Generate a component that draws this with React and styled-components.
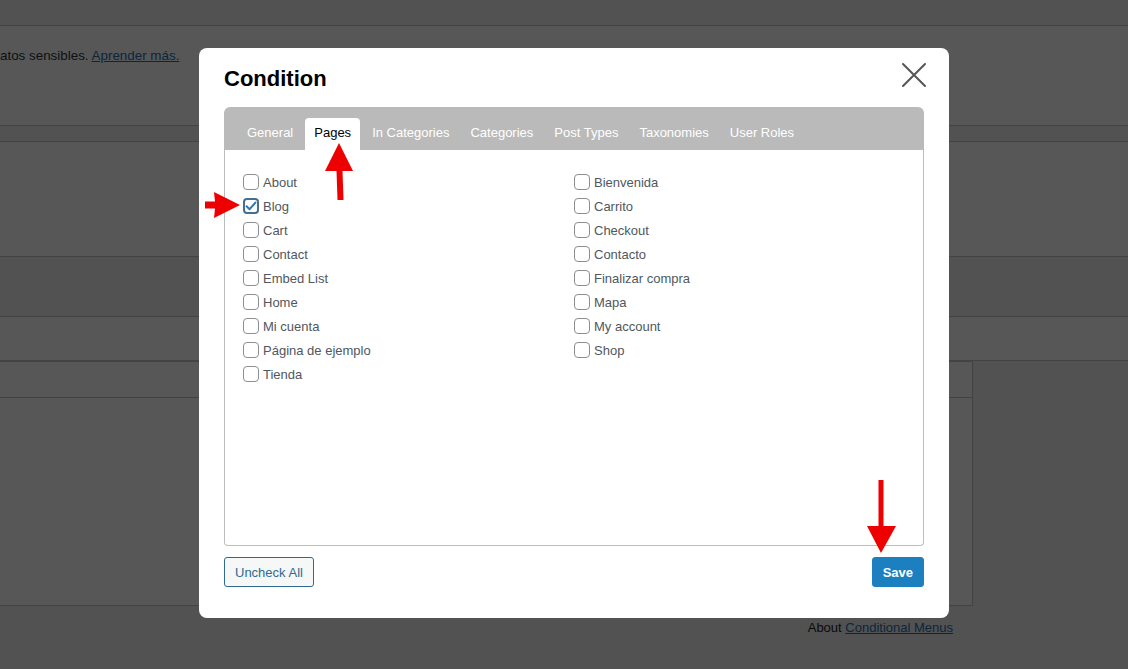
import React from "react";
import styled, { createGlobalStyle } from "styled-components";

const GlobalStyle = createGlobalStyle`
  html, body {
    margin: 0;
    padding: 0;
    height: 100%;
    overflow: hidden;
    background: #f0f0f1;
    font-family: "Liberation Sans", Arial, sans-serif;
  }
  * { box-sizing: border-box; }
`;

/* ---------- admin page behind the overlay ---------- */

const AdminPage = styled.div`
  display: flex;
  flex-direction: column;
  width: 1128px;
  height: 669px;
`;

const Strip = styled.div`
  height: ${(p) => p.$h}px;
  flex: none;
  background: ${(p) => (p.$white ? "#ffffff" : "#f0f0f1")};
  border-bottom: 1px solid #c3c4c7;
`;

const NoticeText = styled.p`
  margin: 0;
  padding-top: 22px;
  font-size: 13.4px;
  line-height: 16px;
  color: #2c3338;

  a {
    color: #2271b1;
    text-decoration: underline;
  }
`;

const TableBox = styled.div`
  height: 245px;
  flex: none;
  margin-right: 155px;
  background: #ffffff;
  border: 1px solid #c3c4c7;
  border-left: none;
`;

const TableHead = styled.div`
  height: 36px;
  border-bottom: 1px solid #c3c4c7;
`;

const FooterNote = styled.p`
  margin: 14px 0 0;
  padding-right: 175px;
  text-align: right;
  font-size: 13px;
  line-height: 16px;
  color: #1d2327;

  a {
    color: #2271b1;
    text-decoration: underline;
  }
`;

const Backdrop = styled.div`
  position: fixed;
  inset: 0;
  background: rgba(0, 0, 0, 0.66);
`;

/* ---------- modal ---------- */

const Modal = styled.div`
  position: fixed;
  left: 199px;
  top: 48px;
  width: 750px;
  height: 570px;
  background: #ffffff;
  border-radius: 8px;
  padding: 18px 25px 0;
  display: flex;
  flex-direction: column;
`;

const ModalHeader = styled.div`
  display: flex;
  align-items: center;
  justify-content: space-between;
`;

const Title = styled.h2`
  margin: 0;
  font-size: 22px;
  line-height: 26px;
  font-weight: 700;
  color: #000;
`;

const CloseButton = styled.button`
  width: 28px;
  height: 28px;
  margin: -8px -4px 0 0;
  padding: 0;
  border: none;
  background: none;
  cursor: pointer;
  display: flex;
  align-items: center;
  justify-content: center;
`;

const TabPanel = styled.div`
  margin-top: 15px;
  height: 439px;
  display: flex;
  flex-direction: column;
`;

const TabBar = styled.div`
  height: 43px;
  flex: none;
  display: flex;
  align-items: flex-end;
  gap: 3px;
  padding: 0 14px;
  background: #bababa;
  border-radius: 6px 6px 0 0;
`;

const Tab = styled.div`
  height: 32px;
  padding: 0 9px;
  line-height: 30px;
  font-size: 13px;
  color: ${(p) => (p.$active ? "#000" : "#fff")};
  background: ${(p) => (p.$active ? "#fff" : "transparent")};
  border-radius: 4px 4px 0 0;
  white-space: nowrap;
`;

const PanelBody = styled.div`
  flex: 1;
  display: grid;
  grid-template-columns: 1fr 1fr;
  grid-template-rows: repeat(9, 24px);
  grid-auto-flow: column;
  align-content: start;
  padding: 20px 18px;
  border: 1px solid #bdbdbd;
  border-top: none;
  border-radius: 0 0 4px 4px;
`;

const Item = styled.label`
  display: flex;
  align-items: center;
  gap: 4px;
  font-size: 13px;
  color: #50575e;
`;

const Box = styled.span`
  width: 16px;
  height: 16px;
  flex: none;
  border: ${(p) => (p.$checked ? "2px solid #456f8e" : "1px solid #8c8f94")};
  border-radius: 4px;
  background: #fff;
  display: flex;
  align-items: center;
  justify-content: center;
`;

const Footer = styled.div`
  display: flex;
  justify-content: space-between;
  margin-top: 11px;
`;

const Button = styled.button`
  height: 30px;
  padding: 0 10px;
  font-family: "Liberation Sans", Arial, sans-serif;
  font-size: 13px;
  font-weight: ${(p) => (p.$primary ? 700 : 400)};
  border-radius: 3px;
  border: 1px solid ${(p) => (p.$primary ? "#1c7fc0" : "#2f6a93")};
  background: ${(p) => (p.$primary ? "#1c7fc0" : "#f6f7f7")};
  color: ${(p) => (p.$primary ? "#fff" : "#2f6a93")};
  cursor: pointer;
`;

/* ---------- annotations ---------- */

const Annotations = styled.svg`
  position: fixed;
  left: 0;
  top: 0;
  pointer-events: none;
`;

const tabs = [
  "General",
  "Pages",
  "In Categories",
  "Categories",
  "Post Types",
  "Taxonomies",
  "User Roles",
];

const pages = [
  "About",
  "Blog",
  "Cart",
  "Contact",
  "Embed List",
  "Home",
  "Mi cuenta",
  "Página de ejemplo",
  "Tienda",
  "Bienvenida",
  "Carrito",
  "Checkout",
  "Contacto",
  "Finalizar compra",
  "Mapa",
  "My account",
  "Shop",
];

function Checkbox({ checked }) {
  return (
    <Box $checked={checked}>
      {checked && (
        <svg width="12" height="12" viewBox="0 0 12 12">
          <path
            d="M1.6 6.2 L4.6 9.2 L10.4 2.6"
            fill="none"
            stroke="#2a78b6"
            strokeWidth="2"
            strokeLinecap="round"
            strokeLinejoin="round"
          />
        </svg>
      )}
    </Box>
  );
}

export default function App() {
  return (
    <>
      <GlobalStyle />
      <AdminPage>
        <Strip $h={26} />
        <Strip $h={100} $white>
          <NoticeText>
            atos sensibles. <a href="#">Aprender más.</a>
          </NoticeText>
        </Strip>
        <Strip $h={16} />
        <Strip $h={115} $white />
        <Strip $h={60} />
        <Strip $h={44} $white />
        <TableBox>
          <TableHead />
        </TableBox>
        <FooterNote>
          About <a href="#">Conditional Menus</a>
        </FooterNote>
      </AdminPage>

      <Backdrop />

      <Modal>
        <ModalHeader>
          <Title>Condition</Title>
          <CloseButton aria-label="Close">
            <svg width="26" height="26" viewBox="0 0 26 26">
              <path
                d="M2 2 L24 24 M24 2 L2 24"
                stroke="#555"
                strokeWidth="2"
                strokeLinecap="round"
              />
            </svg>
          </CloseButton>
        </ModalHeader>

        <TabPanel>
          <TabBar>
            {tabs.map((t) => (
              <Tab key={t} $active={t === "Pages"}>
                {t}
              </Tab>
            ))}
          </TabBar>
          <PanelBody>
            {pages.map((p) => (
              <Item key={p}>
                <Checkbox checked={p === "Blog"} />
                {p}
              </Item>
            ))}
          </PanelBody>
        </TabPanel>

        <Footer>
          <Button>Uncheck All</Button>
          <Button $primary>Save</Button>
        </Footer>
      </Modal>

      <Annotations width="1128" height="669" viewBox="0 0 1128 669">
        <polygon
          fill="#ee0000"
          points="339,143 353,171 342.5,171 343.5,200 337.5,200 336.5,171 325,171"
        />
        <polygon
          fill="#ee0000"
          points="240,205 214,218 215,208.5 205,208.5 205,201.5 215,201.5 214,192"
        />
        <polygon
          fill="#ee0000"
          points="881,553 867,526 878.5,526 878.5,480 883.5,480 883.5,526 896,526"
        />
      </Annotations>
    </>
  );
}
